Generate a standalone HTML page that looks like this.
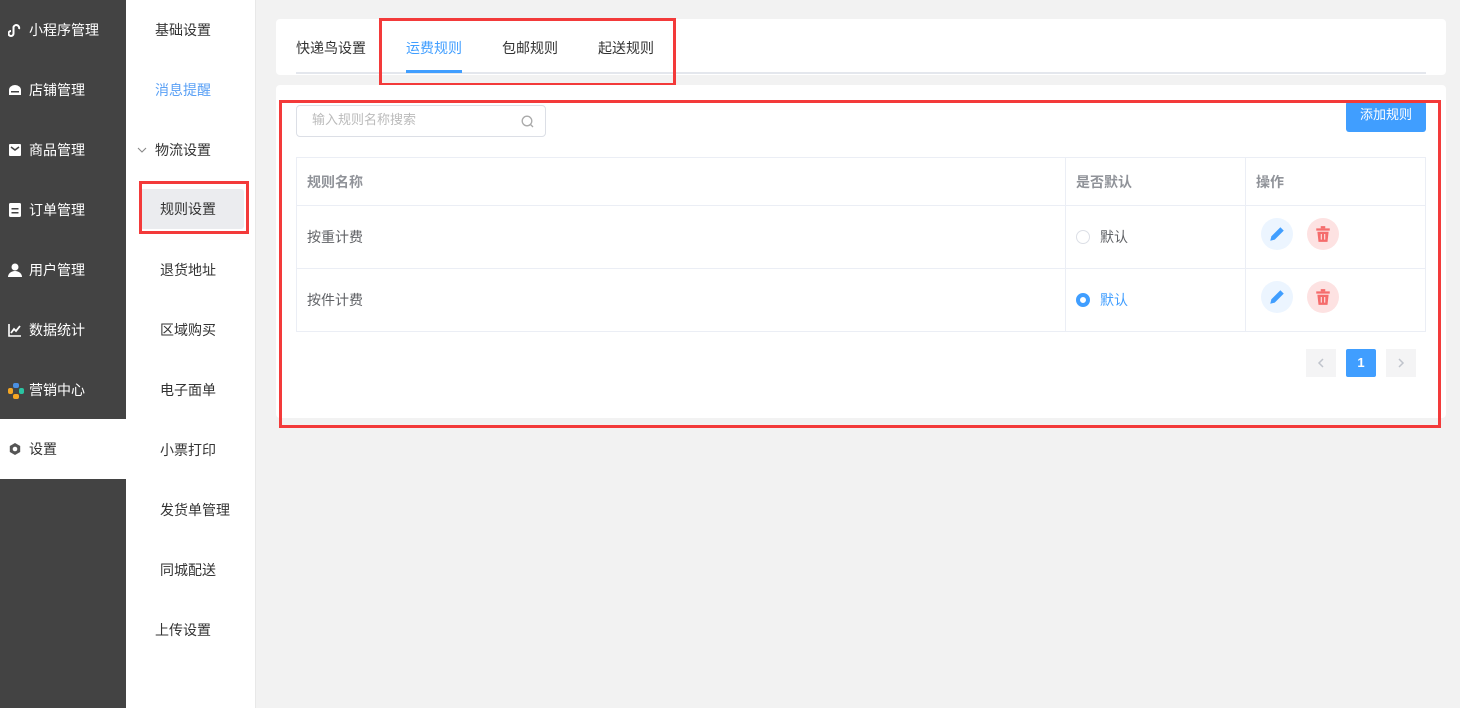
<!DOCTYPE html>
<html><head><meta charset="utf-8"><style>
*{margin:0;padding:0;box-sizing:border-box}
body{width:1460px;height:708px;background:#f2f2f2;font-family:"Liberation Sans","Noto Sans CJK SC",sans-serif;font-size:14px;color:#333;position:relative;overflow:hidden}
.side{position:absolute;left:0;top:0;width:126px;height:708px;background:#434343}
.side div{position:absolute;left:0;width:126px;height:60px;color:#fff;line-height:60px;padding-left:29px}
.side div.on{background:#fff;color:#333}
.side svg{position:absolute;left:8px;top:23px}
.sub{position:absolute;left:126px;top:0;width:130px;height:708px;background:#fff;border-right:1px solid #e8e8e8}
.sub div{position:absolute;left:0;width:130px;height:60px;line-height:60px;color:#333}
.abs{position:absolute}
.card{position:absolute;background:#fff;border-radius:4px}
.tab{position:absolute;top:38px;font-size:14px}
.rb{position:absolute;border:3px solid #f33a3a}
</style></head><body>
<div class="side">
<div style="top:0"><svg width="14" height="14" viewBox="0 0 14 14"><path d="M3 13a2.5 2.5 0 1 1 0-5M3 13a2.5 2.5 0 0 0 2.5-2.5V4A2.5 2.5 0 1 1 11 6" fill="none" stroke="#fff" stroke-width="2"/></svg>小程序管理</div>
<div style="top:60px"><svg width="14" height="14" viewBox="0 0 14 14"><path d="M1 7a6 5 0 0 1 12 0v5H1z" fill="#fff"/><rect x="3" y="8" width="8" height="1.5" fill="#434343"/></svg>店铺管理</div>
<div style="top:120px"><svg width="14" height="14" viewBox="0 0 14 14"><rect x="1" y="1" width="12" height="12" rx="1" fill="#fff"/><path d="M3 4l4 3 4-3" fill="none" stroke="#434343" stroke-width="1.5"/></svg>商品管理</div>
<div style="top:180px"><svg width="14" height="14" viewBox="0 0 14 14"><rect x="1" y="0" width="12" height="14" rx="1.5" fill="#fff"/><rect x="3.5" y="5" width="7" height="1.5" fill="#434343"/><rect x="3.5" y="9" width="7" height="1.5" fill="#434343"/></svg>订单管理</div>
<div style="top:240px"><svg width="14" height="14" viewBox="0 0 14 14"><circle cx="7" cy="4" r="3.5" fill="#fff"/><path d="M0 14a7 6 0 0 1 14 0z" fill="#fff"/></svg>用户管理</div>
<div style="top:300px"><svg width="14" height="14" viewBox="0 0 14 14"><path d="M1 1v12h12" fill="none" stroke="#fff" stroke-width="1.6"/><path d="M3 10l3-4 2 2 4-5" fill="none" stroke="#fff" stroke-width="1.8"/></svg>数据统计</div>
<div style="top:360px"><svg width="16" height="16" viewBox="0 0 16 16"><rect x="5" y="0" width="6" height="5" rx="2" fill="#4a90e2"/><rect x="0" y="5" width="5" height="6" rx="2" fill="#f5a623"/><rect x="11" y="5" width="5" height="6" rx="2" fill="#2ac3a2"/><rect x="5" y="11" width="6" height="5" rx="2" fill="#f5a623"/></svg>营销中心</div>
<div class="on" style="top:419px"><svg width="14" height="14" viewBox="0 0 14 14"><path d="M7 1l5.2 3v6L7 13 1.8 10V4z" fill="#555"/><circle cx="7" cy="7" r="2.3" fill="#fff"/></svg>设置</div>
</div>
<div class="sub">
<div style="top:0;padding-left:29px">基础设置</div>
<div style="top:60px;padding-left:29px;color:#5aa0f5">消息提醒</div>
<div style="top:120px;padding-left:29px">物流设置<svg class="abs" style="left:11px;top:27px" width="10" height="6" viewBox="0 0 10 6"><path d="M1 1l4 4 4-4" fill="none" stroke="#888" stroke-width="1.1"/></svg></div>
<div style="top:189px;left:14px;width:104px;height:40px;line-height:40px;background:#ebecef;border-radius:3px;padding-left:20px">规则设置</div>
<div style="top:240px;padding-left:34px">退货地址</div>
<div style="top:300px;padding-left:34px">区域购买</div>
<div style="top:360px;padding-left:34px">电子面单</div>
<div style="top:420px;padding-left:34px">小票打印</div>
<div style="top:480px;padding-left:34px">发货单管理</div>
<div style="top:540px;padding-left:34px">同城配送</div>
<div style="top:600px;padding-left:29px">上传设置</div>
</div>
<div class="rb" style="left:139px;top:181px;width:110px;height:53px"></div>

<div class="card" style="left:276px;top:19px;width:1170px;height:56px">
<div class="abs" style="left:20px;top:53px;width:1130px;height:2px;background:#e4e7ed"></div>
<div class="abs" style="left:130px;top:51px;width:56px;height:3px;background:#409eff"></div>
</div>
<div class="tab" style="left:296px">快递鸟设置</div>
<div class="tab" style="left:406px;color:#409eff">运费规则</div>
<div class="tab" style="left:502px">包邮规则</div>
<div class="tab" style="left:598px">起送规则</div>
<div class="rb" style="left:379px;top:18px;width:297px;height:68px"></div>

<div class="card" style="left:276px;top:85px;width:1170px;height:333px"></div>
<div class="abs" style="left:296px;top:105px;width:250px;height:32px;border:1px solid #dcdfe6;border-radius:4px;background:#fff;color:#bbb;padding-left:15px;line-height:28px;font-size:13px">输入规则名称搜索
<svg class="abs" style="right:11px;top:9px" width="13" height="13" viewBox="0 0 13 13"><circle cx="6" cy="6" r="4.8" fill="none" stroke="#aaa" stroke-width="1.3"/><path d="M9.5 9.5l2.5 2.5" stroke="#aaa" stroke-width="1.3"/></svg></div>
<div class="abs" style="left:1346px;top:101px;width:80px;height:31px;background:#409eff;border-radius:3px;color:#fff;font-size:13px;text-align:center;line-height:27px">添加规则</div>

<div class="abs" style="left:296px;top:157px;width:1130px;height:175px;border:1px solid #ebeef5;background:#fff">
<div class="abs" style="left:0;top:47px;width:1128px;height:1px;background:#ebeef5"></div>
<div class="abs" style="left:0;top:110px;width:1128px;height:1px;background:#ebeef5"></div>
<div class="abs" style="left:768px;top:0;width:1px;height:173px;background:#ebeef5"></div>
<div class="abs" style="left:948px;top:0;width:1px;height:173px;background:#ebeef5"></div>
<div class="abs" style="left:10px;top:14px;color:#909399;font-weight:bold">规则名称</div>
<div class="abs" style="left:779px;top:14px;color:#909399;font-weight:bold">是否默认</div>
<div class="abs" style="left:959px;top:14px;color:#909399;font-weight:bold">操作</div>
<div class="abs" style="left:10px;top:69px;color:#606266">按重计费</div>
<div class="abs" style="left:10px;top:132px;color:#606266">按件计费</div>
<div class="abs" style="left:779px;top:72px;width:14px;height:14px;border:1px solid #dcdfe6;border-radius:50%"></div>
<div class="abs" style="left:803px;top:69px;color:#606266">默认</div>
<div class="abs" style="left:779px;top:135px;width:14px;height:14px;border:4px solid #409eff;border-radius:50%;background:#fff"></div>
<div class="abs" style="left:803px;top:132px;color:#409eff">默认</div>
</div>
<div class="abs" style="left:1261px;top:218px;width:32px;height:32px;border-radius:50%;background:#ecf5ff"></div>
<div class="abs" style="left:1307px;top:218px;width:32px;height:32px;border-radius:50%;background:#fde2e2"></div>
<div class="abs" style="left:1261px;top:281px;width:32px;height:32px;border-radius:50%;background:#ecf5ff"></div>
<div class="abs" style="left:1307px;top:281px;width:32px;height:32px;border-radius:50%;background:#fde2e2"></div>
<svg class="abs" style="left:1268px;top:225px" width="18" height="18" viewBox="0 0 16 16"><path d="M2 14l1-4 8-8 3 3-8 8z" fill="#409eff"/></svg>
<svg class="abs" style="left:1268px;top:288px" width="18" height="18" viewBox="0 0 16 16"><path d="M2 14l1-4 8-8 3 3-8 8z" fill="#409eff"/></svg>
<svg class="abs" style="left:1314px;top:225px" width="18" height="18" viewBox="0 0 16 16"><rect x="2" y="3" width="12" height="2" fill="#f56c6c"/><rect x="6" y="1" width="4" height="2" fill="#f56c6c"/><path d="M3 6h10l-1 9H4z" fill="#f56c6c"/><path d="M6.5 8v5M9.5 8v5" stroke="#fde2e2" stroke-width="1"/></svg>
<svg class="abs" style="left:1314px;top:288px" width="18" height="18" viewBox="0 0 16 16"><rect x="2" y="3" width="12" height="2" fill="#f56c6c"/><rect x="6" y="1" width="4" height="2" fill="#f56c6c"/><path d="M3 6h10l-1 9H4z" fill="#f56c6c"/><path d="M6.5 8v5M9.5 8v5" stroke="#fde2e2" stroke-width="1"/></svg>
<div class="abs" style="left:1306px;top:349px;width:30px;height:28px;background:#f4f4f5"><svg class="abs" style="left:11px;top:9px" width="8" height="10" viewBox="0 0 8 10"><path d="M6 1L2 5l4 4" fill="none" stroke="#c0c4cc" stroke-width="1.5"/></svg></div>
<div class="abs" style="left:1346px;top:349px;width:30px;height:28px;background:#409eff;color:#fff;text-align:center;line-height:28px;font-size:13px;font-weight:bold;border-radius:2px">1</div>
<div class="abs" style="left:1386px;top:349px;width:30px;height:28px;background:#f4f4f5"><svg class="abs" style="left:11px;top:9px" width="8" height="10" viewBox="0 0 8 10"><path d="M2 1l4 4-4 4" fill="none" stroke="#c0c4cc" stroke-width="1.5"/></svg></div>
<div class="rb" style="left:279px;top:100px;width:1162px;height:328px"></div>
</body></html>
